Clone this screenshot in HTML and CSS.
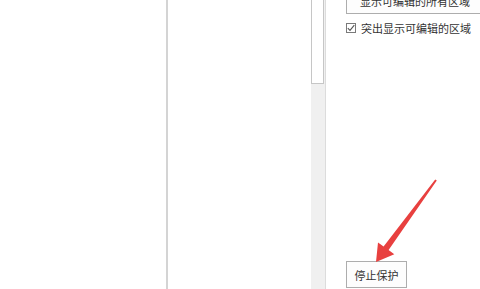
FILE: index.html
```html
<!DOCTYPE html>
<html lang="zh-CN">
<head>
    <meta charset="UTF-8">
    <meta name="viewport" content="width=device-width, initial-scale=1.0">
    <title>限制编辑</title>
    <link rel="stylesheet" href="styles.css">
</head>
<body>
    <div class="window">
        <div class="doc-pane"></div>
        <div class="list-pane">
            <div class="list-body"></div>
            <div class="scrollbar">
                <div class="scroll-thumb"></div>
            </div>
        </div>
        <div class="side-panel">
            <button class="btn btn-top">显示可编辑的所有区域</button>
            <label class="check-row">
                <span class="check-box">
                    <svg width="8" height="8" viewBox="0 0 8 8"><path d="M0.8 4.2 L3 6.4 L7.3 1.2" fill="none" stroke="#555" stroke-width="1.1"/></svg>
                </span>
                突出显示可编辑的区域
            </label>
            <button class="btn btn-stop">停止保护</button>
        </div>
    </div>

    <!-- red annotation arrow -->
    <svg class="arrow" width="480" height="289" viewBox="0 0 480 289">
        <polygon fill="#e8403f" points="436.8,180.6 388.6,250 394.3,254.2 376,262 378,242.4 383.6,246.4 435.2,179.4"/>
    </svg>
</body>
</html>
```

FILE: styles.css
```css
/* Word-like "restrict editing" pane */
body {
    margin: 0;
    font-family: "Noto Sans CJK SC", "Noto Sans", sans-serif;
    color: #333;
    background: #fff;
}

.window {
    display: flex;
    width: 480px;
    height: 289px;
    overflow: hidden;
}

.doc-pane {
    flex-shrink: 0;
    width: 166px;
    border-right: 2px solid #d4d4d4;
    background: #fff;
}

.list-pane {
    flex-shrink: 0;
    display: flex;
    width: 157px;
    border-right: 1px solid #dcdcdc;
}

.list-body {
    flex: 1;
    background: #fff;
}

.scrollbar {
    width: 14px;
    background: #f0f0f0;
}

.scroll-thumb {
    height: 84px;
    margin-right: 1px;
    border: 1px solid #c6c6c6;
    border-top: none;
    background: #fff;
    box-sizing: border-box;
}

.side-panel {
    flex: 1;
    min-width: 0;
    overflow: hidden;
    display: flex;
    flex-direction: column;
    align-items: flex-start;
    padding-left: 20px;
}

.btn {
    flex-shrink: 0;
    font-family: inherit;
    font-size: 11px;
    color: #333;
    background: #fdfdfd;
    border: 1px solid #adadad;
    border-radius: 0;
    padding: 0 8px;
    cursor: pointer;
}

.btn-top {
    height: 27px;
    margin-top: -13px;
    padding: 0 13px;
    width: 150px;
    text-align: left;
    line-height: 16px;
}

.check-row {
    display: flex;
    align-items: center;
    margin-top: 8px;
    font-size: 11px;
    line-height: 12px;
}

.check-box {
    display: flex;
    align-items: center;
    justify-content: center;
    width: 10px;
    height: 10px;
    margin-right: 5px;
    border: 1px solid #7a7a7a;
    box-sizing: border-box;
    background: #fff;
}

.btn-stop {
    margin-top: auto;
    margin-bottom: 1px;
    width: 61px;
    height: 27px;
    padding: 0;
}

.arrow {
    position: absolute;
    left: 0;
    top: 0;
    pointer-events: none;
}
```
